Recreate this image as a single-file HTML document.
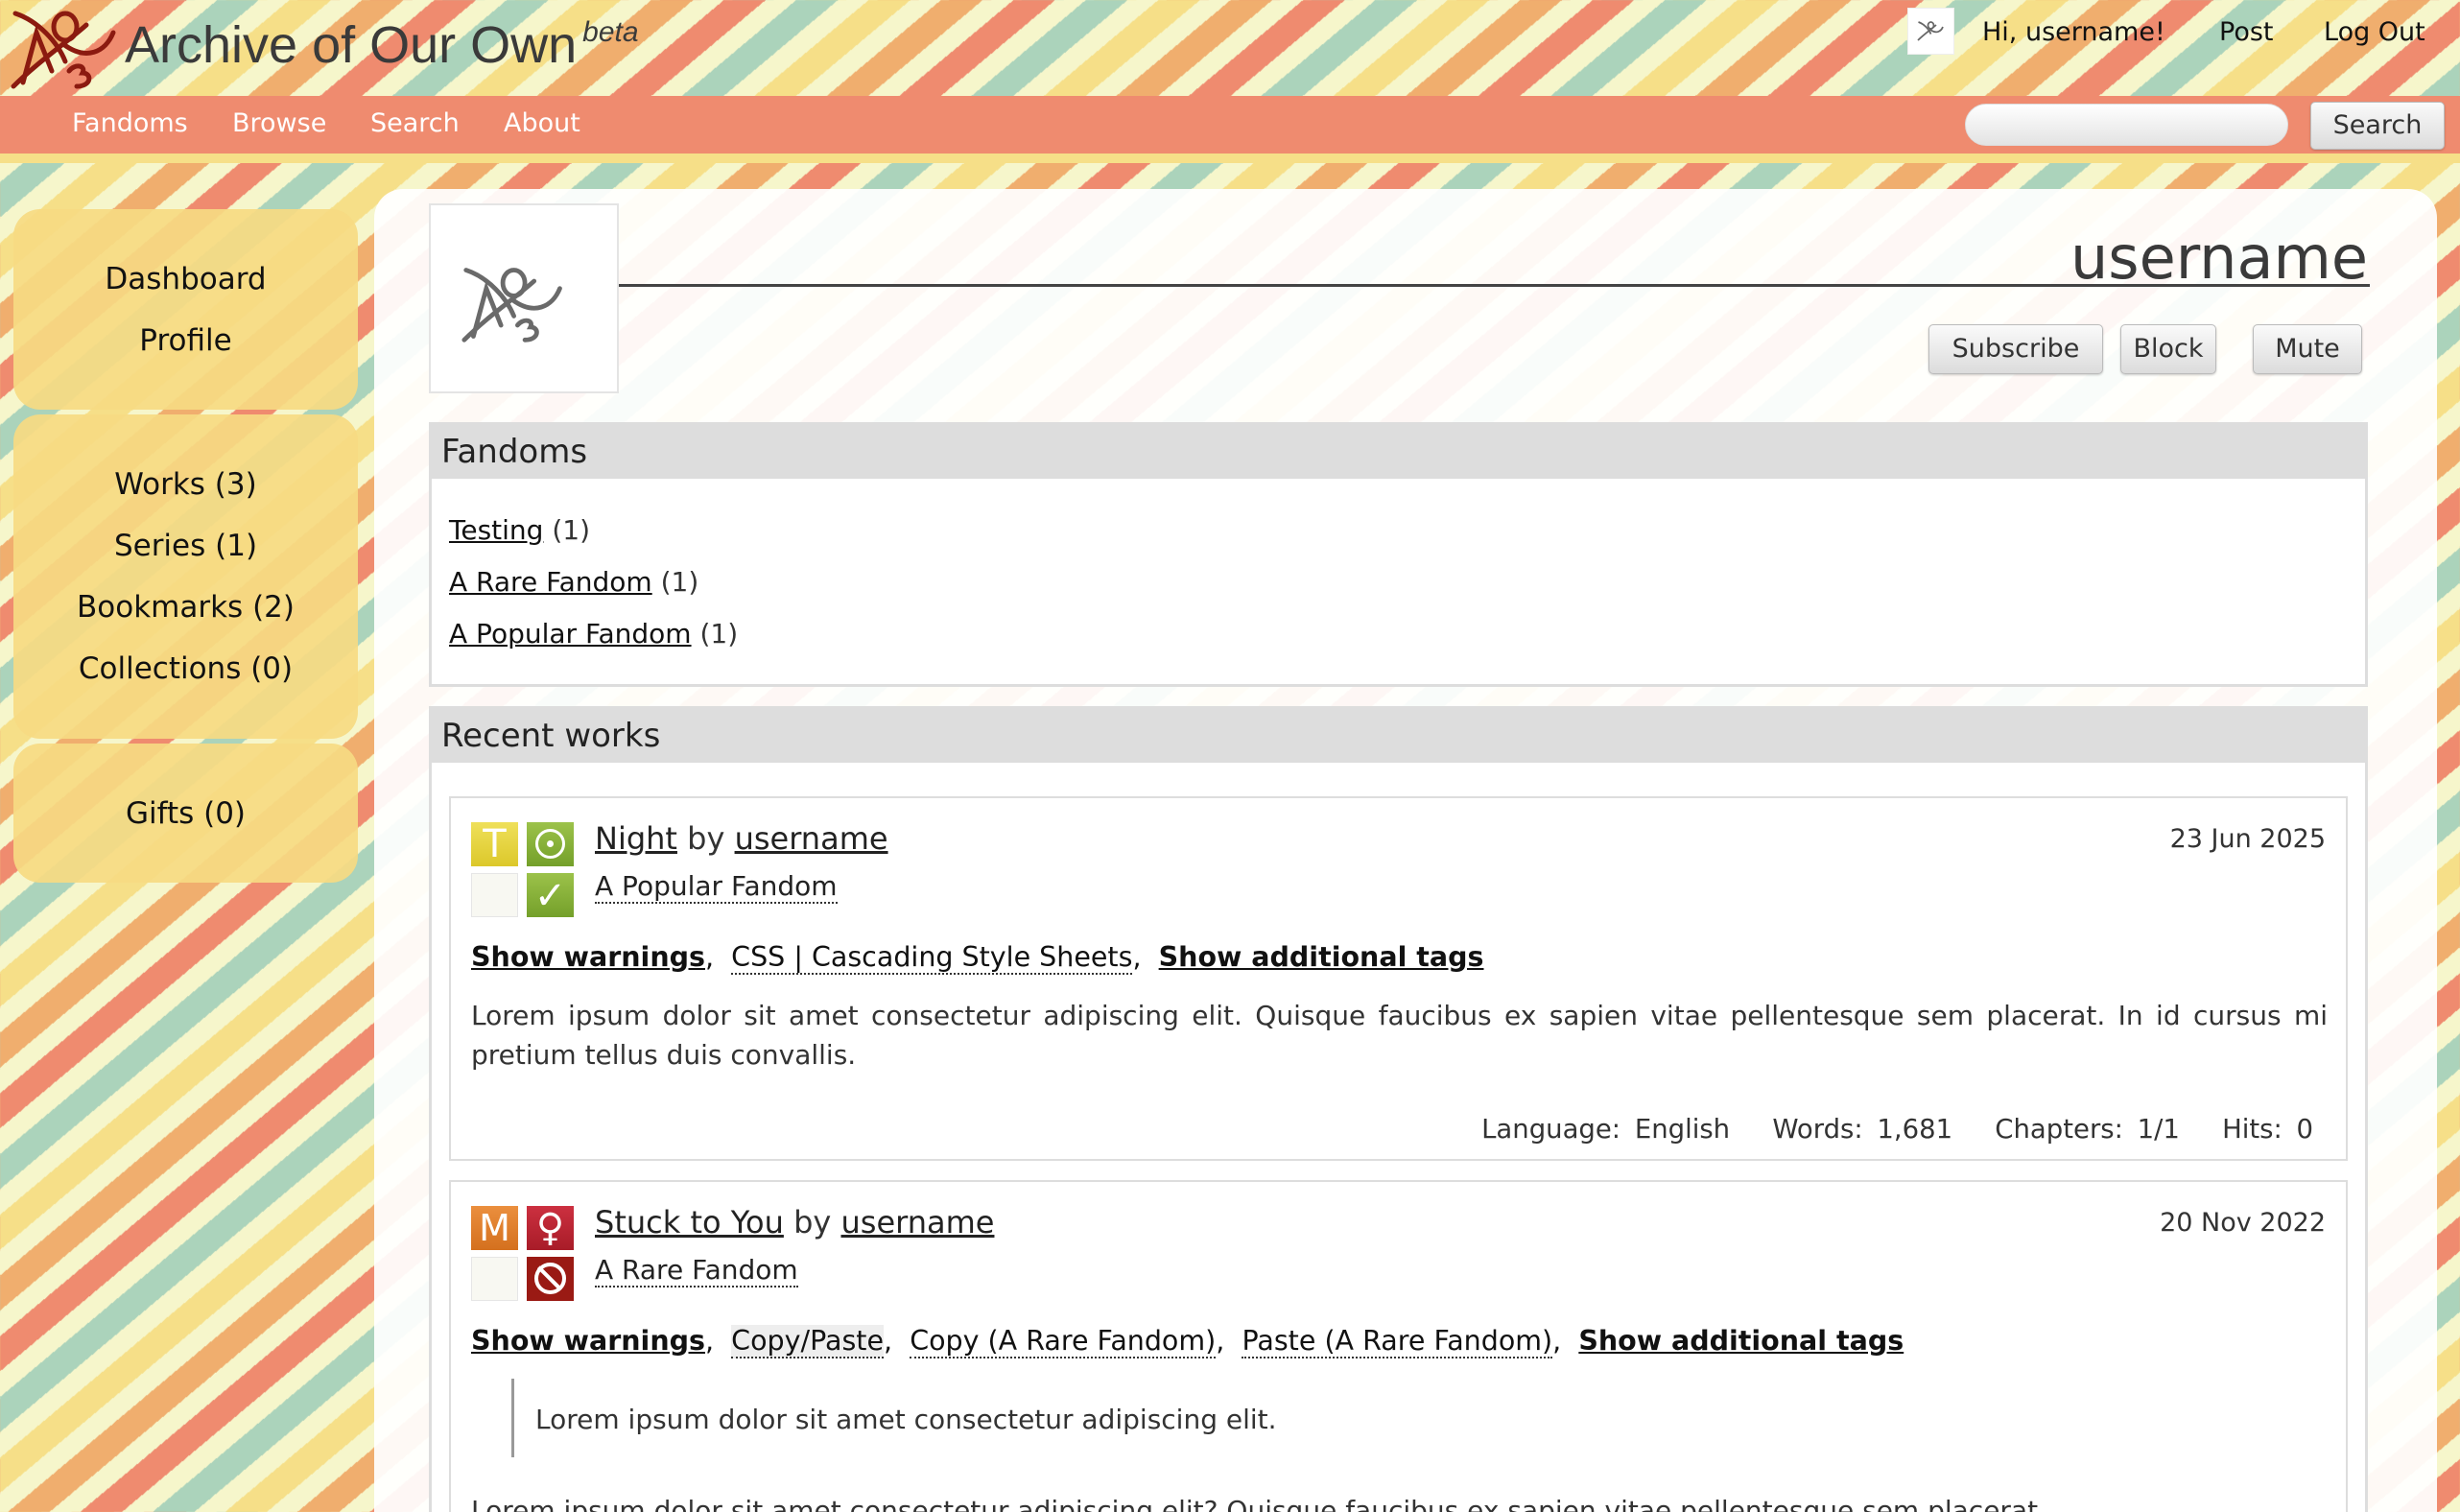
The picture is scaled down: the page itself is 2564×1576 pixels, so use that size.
<!DOCTYPE html>
<html><head><meta charset="utf-8">
<style>
*{box-sizing:border-box;margin:0;padding:0}
html,body{width:2564px;height:1576px;overflow:hidden}
body{font-family:"DejaVu Sans","Liberation Sans",sans-serif;color:#111;position:relative;
background:repeating-linear-gradient(140deg,#f6df88 0 28px,#f6f6cb 28px 48.5px,#f0ae6e 48.5px 76.5px,#f6f6cb 76.5px 97px,#ef8b6f 97px 125px,#f6f6cb 125px 145.5px,#abd3bb 145.5px 173.5px,#f6f6cb 173.5px 194px);}
.abs{position:absolute}
a{color:inherit}
#title{left:130px;top:16px;font-family:"Liberation Sans",sans-serif;font-size:54px;color:#3a3a3a;white-space:nowrap}
#title sup{font-style:italic;font-size:30px;vertical-align:0;position:relative;top:-22px;margin-left:6px}
#nav{left:0;top:100px;width:2564px;height:60px;background:#ef8b6f}
#strip{left:0;top:160px;width:2564px;height:10px;background:#f6df88}
.navi{top:113px;color:#fff;font-size:27px}
.top{top:18px;font-size:27px;color:#111}
#sbox{left:2048px;top:108px;width:337px;height:44px;border-radius:22px;background:linear-gradient(#fff,#e3e3e3);border:1px solid #ddd}
.btn{position:absolute;border:1px solid #bbb;border-radius:5px;background:linear-gradient(#fafafa,#dcdcdc);color:#333;font-size:27px;text-align:center;box-shadow:0 1px 2px rgba(0,0,0,.2)}
#panel{left:390px;top:197px;width:2150px;height:1400px;border-radius:30px 30px 0 0;background:rgba(255,255,255,.93)}
.side{position:absolute;left:14px;width:359px;border-radius:28px;background:rgba(246,218,130,.92);text-align:center;font-size:31px;color:#111}
.side div{height:64px;line-height:64px}
.box{position:absolute;left:447px;width:2021px;border:3px solid #ddd;background:#fff}
.box h3{background:#ddd;font-weight:normal;font-size:34px;color:#222;height:56px;line-height:56px;padding-left:10px}
.fl{font-size:28px;color:#333;height:54px;line-height:54px}
.fl a{color:#111}
.work{position:absolute;left:468px;width:1979px;border:2px solid #ddd;background:#fff}
.ic{position:absolute;width:49px;height:46px}
.dot{border-bottom:2px dotted #333;text-decoration:none}
.sum{font-size:28px;color:#333;line-height:41px;text-align:justify}
</style></head><body>
<svg class="abs" style="left:10px;top:4px" width="120" height="92" viewBox="0 0 120 92">
<g fill="none" stroke="#8b1a10" stroke-width="5" stroke-linecap="round">
<path d="M6 10 C30 18 50 40 58 60 M4 86 C30 60 60 40 80 22"/>
<path d="M14 82 L28 30 L44 70"/>
<ellipse cx="58" cy="24" rx="12" ry="14"/>
<path d="M56 42 C80 60 100 50 108 30"/>
<path d="M62 70 C68 62 80 64 76 72 C86 72 86 86 70 86"/>
</g></svg>
<div id="title" class="abs">Archive of Our Own<sup>beta</sup></div>
<div class="abs" style="left:1988px;top:8px;width:49px;height:49px;background:#fff;border:1px solid #eee"></div>
<svg class="abs" style="left:1998px;top:18px" width="30" height="28" viewBox="0 0 120 92"><g fill="none" stroke="#666" stroke-width="7"><path d="M6 10 C30 18 50 40 58 60 M4 86 C30 60 60 40 80 22"/><ellipse cx="58" cy="24" rx="12" ry="14"/><path d="M56 42 C80 60 100 50 108 30"/></g></svg>
<div class="abs top" style="left:2066px">Hi, username!</div>
<div class="abs top" style="left:2313px">Post</div>
<div class="abs top" style="left:2422px">Log Out</div>
<div id="nav" class="abs"></div>
<div id="strip" class="abs"></div>
<div class="abs navi" style="left:75px">Fandoms</div>
<div class="abs navi" style="left:242px">Browse</div>
<div class="abs navi" style="left:386px">Search</div>
<div class="abs navi" style="left:525px">About</div>
<div id="sbox" class="abs"></div>
<div class="btn" style="left:2408px;top:106px;width:140px;height:50px;line-height:48px">Search</div>

<div class="side" style="top:218px;height:209px;padding-top:41px"><div>Dashboard</div><div>Profile</div></div>
<div class="side" style="top:432px;height:338px;padding-top:41px"><div>Works (3)</div><div>Series (1)</div><div>Bookmarks (2)</div><div>Collections (0)</div></div>
<div class="side" style="top:775px;height:145px;padding-top:41px"><div>Gifts (0)</div></div>

<div id="panel" class="abs"></div>
<div class="abs" style="left:447px;top:212px;width:198px;height:198px;background:#fff;border:2px solid #e4e4e4"></div>
<svg class="abs" style="left:480px;top:270px" width="115" height="92" viewBox="0 0 120 92"><g fill="none" stroke="#6a6a6a" stroke-width="5" stroke-linecap="round"><path d="M6 10 C30 18 50 40 58 60 M4 86 C30 60 60 40 80 22"/><path d="M14 82 L28 30 L44 70"/><ellipse cx="58" cy="24" rx="12" ry="14"/><path d="M56 42 C80 60 100 50 108 30"/><path d="M62 70 C68 62 80 64 76 72 C86 72 86 86 70 86"/></g></svg>
<div class="abs" style="left:645px;top:296px;width:1825px;height:3px;background:#444"></div>
<div class="abs" style="right:96px;top:232px;font-size:62px;color:#3a3a3a">username</div>
<div class="btn" style="left:2010px;top:338px;width:182px;height:52px;line-height:50px">Subscribe</div>
<div class="btn" style="left:2210px;top:338px;width:100px;height:52px;line-height:50px">Block</div>
<div class="btn" style="left:2348px;top:338px;width:114px;height:52px;line-height:50px">Mute</div>

<div class="box" style="top:440px;height:276px"><h3>Fandoms</h3>
<div style="padding:27px 0 0 18px">
<div class="fl"><a href="#">Testing</a> (1)</div>
<div class="fl"><a href="#">A Rare Fandom</a> (1)</div>
<div class="fl"><a href="#">A Popular Fandom</a> (1)</div>
</div></div>

<div class="box" style="top:736px;height:900px"><h3>Recent works</h3></div>

<div class="work" style="top:830px;height:380px">
<div class="ic" style="left:21px;top:25px;background:linear-gradient(#efe05a,#dcc82a);color:#fff;font-size:40px;text-align:center;line-height:46px">T</div>
<div class="ic" style="left:79px;top:25px;background:linear-gradient(#9cc24a,#74a02a)"><div style="position:absolute;left:9px;top:7px;width:31px;height:31px;border:3px solid #fff;border-radius:50%"></div><div style="position:absolute;left:21px;top:19px;width:7px;height:7px;background:#fff;border-radius:50%"></div></div>
<div class="ic" style="left:21px;top:78px;background:#f8f8f2;border:1px solid #e6e6e6"></div>
<div class="ic" style="left:79px;top:78px;background:linear-gradient(#9cc24a,#74a02a);color:#fff;font-size:40px;text-align:center;line-height:48px">✓</div>
<div class="abs" style="left:150px;top:23px;font-size:32px;color:#333"><a href="#" style="color:#222">Night</a> by <a href="#" style="color:#222">username</a></div>
<div class="abs" style="left:150px;top:75px;font-size:28px;color:#222"><span class="dot">A Popular Fandom</span></div>
<div class="abs" style="right:21px;top:27px;font-size:27px;color:#333">23 Jun 2025</div>
<div class="abs" style="left:21px;top:149px;font-size:28.5px;color:#111;white-space:nowrap"><b><u>Show warnings</u></b>, &nbsp;<span class="dot">CSS | Cascading Style Sheets</span>, &nbsp;<b><u>Show additional tags</u></b></div>
<div class="abs sum" style="left:21px;top:206px;width:1935px">Lorem ipsum dolor sit amet consectetur adipiscing elit. Quisque faucibus ex sapien vitae pellentesque sem placerat. In id cursus mi pretium tellus duis convallis.</div>
<div class="abs" style="right:34px;top:329px;font-size:27.5px;color:#333;word-spacing:6px;white-space:nowrap">Language:&nbsp;English &nbsp; Words:&nbsp;1,681 &nbsp; Chapters:&nbsp;1/1 &nbsp; Hits:&nbsp;0</div>
</div>

<div class="work" style="top:1230px;height:400px">
<div class="ic" style="left:21px;top:25px;background:linear-gradient(#eb8f3e,#d4701e);color:#fff;font-size:38px;text-align:center;line-height:46px">M</div>
<div class="ic" style="left:79px;top:25px;background:linear-gradient(#cc3040,#a81c28);color:#fff;font-size:40px;text-align:center;line-height:46px">♀</div>
<div class="ic" style="left:21px;top:78px;background:#f8f8f2;border:1px solid #e6e6e6"></div>
<div class="ic" style="left:79px;top:78px;background:#9a1a14"><div style="position:absolute;left:8px;top:6px;width:33px;height:33px;border:4px solid #fff;border-radius:50%"></div><div style="position:absolute;left:22px;top:6px;width:4px;height:33px;background:#fff;transform:rotate(-45deg)"></div></div>
<div class="abs" style="left:150px;top:23px;font-size:32px;color:#333"><a href="#" style="color:#222">Stuck to You</a> by <a href="#" style="color:#222">username</a></div>
<div class="abs" style="left:150px;top:75px;font-size:28px;color:#222"><span class="dot">A Rare Fandom</span></div>
<div class="abs" style="right:21px;top:27px;font-size:27px;color:#333">20 Nov 2022</div>
<div class="abs" style="left:21px;top:149px;font-size:28.5px;color:#111;white-space:nowrap"><b><u>Show warnings</u></b>, &nbsp;<span class="dot" style="background:#eee">Copy/Paste</span>, &nbsp;<span class="dot">Copy (A Rare Fandom)</span>, &nbsp;<span class="dot">Paste (A Rare Fandom)</span>, &nbsp;<b><u>Show additional tags</u></b></div>
<div class="abs" style="left:63px;top:205px;width:3px;height:82px;background:#999"></div>
<div class="abs sum" style="left:88px;top:227px">Lorem ipsum dolor sit amet consectetur adipiscing elit.</div>
<div class="abs sum" style="left:21px;top:322px;white-space:nowrap">Lorem ipsum dolor sit amet consectetur adipiscing elit? Quisque faucibus ex sapien vitae pellentesque sem placerat.</div>
</div>
</body></html>
